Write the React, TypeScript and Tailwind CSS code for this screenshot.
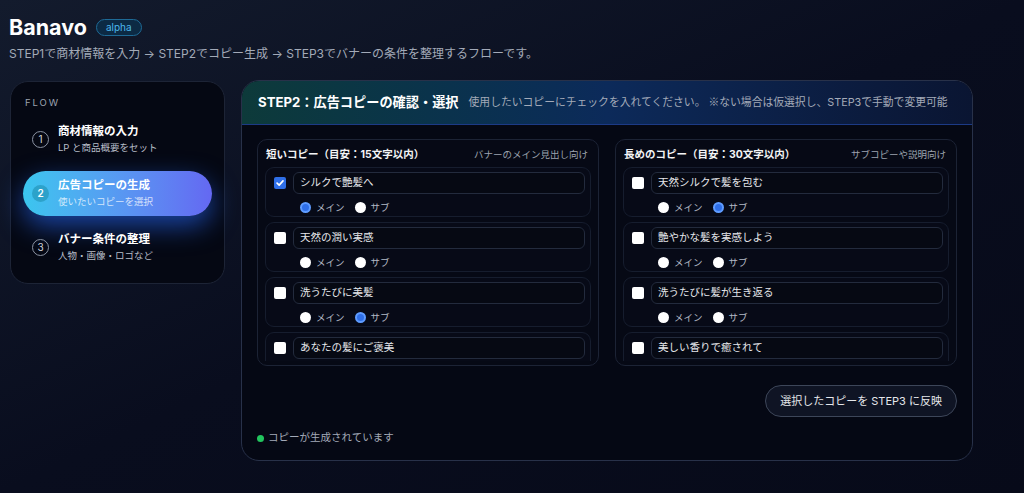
import React from 'react'

type Role = 'main' | 'sub' | null

interface CopyItem {
  text: string
  checked: boolean
  role: Role
}

const shortCopies: CopyItem[] = [
  { text: 'シルクで艶髪へ', checked: true, role: 'main' },
  { text: '天然の潤い実感', checked: false, role: null },
  { text: '洗うたびに美髪', checked: false, role: 'sub' },
  { text: 'あなたの髪にご褒美', checked: false, role: null },
]

const longCopies: CopyItem[] = [
  { text: '天然シルクで髪を包む', checked: false, role: 'sub' },
  { text: '艶やかな髪を実感しよう', checked: false, role: null },
  { text: '洗うたびに髪が生き返る', checked: false, role: null },
  { text: '美しい香りで癒されて', checked: false, role: null },
]

const steps = [
  { no: 1, title: '商材情報の入力', sub: 'LP と商品概要をセット' },
  { no: 2, title: '広告コピーの生成', sub: '使いたいコピーを選択' },
  { no: 3, title: 'バナー条件の整理', sub: '人物・画像・ロゴなど' },
]

function Checkbox({ checked }: { checked: boolean }) {
  if (checked) {
    return (
      <span className="flex h-[12px] w-[12px] shrink-0 items-center justify-center rounded-[2px] bg-[#2f6fe8]">
        <svg viewBox="0 0 12 12" className="h-[10px] w-[10px]" fill="none" stroke="white" strokeWidth="2" strokeLinecap="round" strokeLinejoin="round">
          <path d="M2.5 6.2 5 8.6 9.6 3.4" />
        </svg>
      </span>
    )
  }
  return <span className="h-[12px] w-[12px] shrink-0 rounded-[2px] bg-white" />
}

function Radio({ on, label }: { on: boolean; label: string }) {
  return (
    <span className="flex items-center gap-[5px]">
      {on ? (
        <span className="h-[11px] w-[11px] rounded-full border-[2px] border-[#5f9cff] bg-[#2f6fe8]" />
      ) : (
        <span className="h-[11px] w-[11px] rounded-full bg-white" />
      )}
      <span className="text-[9.5px] leading-[13px] text-[#b4bac6]">{label}</span>
    </span>
  )
}

// the last card sits under the scroll edge, so its radio row is never visible
function CopyCard({ item, clipped }: { item: CopyItem; clipped: boolean }) {
  return (
    <div className="h-[50px] shrink-0 rounded-[9px] border border-[#161d2e] bg-[#070a17] pb-[2px] pl-[8px] pr-[5px] pt-[4px]">
      <div className="flex items-center gap-[7px]">
        <Checkbox checked={item.checked} />
        <div className="flex h-[22px] flex-1 items-center rounded-[6px] border border-[#232b3d] bg-[#060913] px-[6px] text-[10.5px] text-[#e5e7eb]">
          {item.text}
        </div>
      </div>
      {!clipped && (
        <div className="mt-[7px] flex h-[13px] items-center gap-[10px] pl-[26px]">
          <Radio on={item.role === 'main'} label="メイン" />
          <Radio on={item.role === 'sub'} label="サブ" />
        </div>
      )}
    </div>
  )
}

function CopyColumn({ title, hint, items }: { title: string; hint: string; items: CopyItem[] }) {
  return (
    <div className="rounded-[10px] border border-[#1c2335] bg-[#060915] px-[7px] pb-[4px] pt-[7px]">
      <div className="flex h-[16px] items-center justify-between px-[1px]">
        <span className="text-[10.5px] font-bold text-[#f3f4f6]">{title}</span>
        <span className="pr-[2px] text-[9.5px] text-[#9ca3af]">{hint}</span>
      </div>
      <div className="mt-[4px] flex h-[194px] flex-col gap-[5px] overflow-hidden">
        {items.map((item, i) => (
          <CopyCard key={item.text} item={item} clipped={i === items.length - 1} />
        ))}
      </div>
    </div>
  )
}

function FlowStep({ no, title, sub, active }: { no: number; title: string; sub: string; active: boolean }) {
  return (
    <div
      className={
        active
          ? 'flex h-[45px] items-center gap-[9px] rounded-full bg-gradient-to-r from-[#3ac6ef] to-[#6468f2] px-[9px] shadow-[0_10px_26px_rgba(37,99,235,0.65)]'
          : 'flex h-[45px] items-center gap-[9px] rounded-full px-[9px]'
      }
    >
      {active ? (
        <span className="flex h-[17px] w-[17px] shrink-0 items-center justify-center rounded-full bg-[#1f8fb0]/60 text-[10px] font-semibold text-white">
          {no}
        </span>
      ) : (
        <span className="flex h-[17px] w-[17px] shrink-0 items-center justify-center rounded-full border border-[#8b93a3] text-[10px] text-[#d1d5db]">
          {no}
        </span>
      )}
      <div>
        <div className="text-[11.5px] font-bold leading-4 text-white">{title}</div>
        <div className={active ? 'text-[9.5px] leading-[18px] text-white/75' : 'text-[9.5px] leading-[18px] text-[#b8bec9]'}>{sub}</div>
      </div>
    </div>
  )
}

export default function App() {
  return (
    <div className="h-[493px] overflow-hidden bg-gradient-to-br from-[#131b2d] via-[#090d1e] to-[#070a19] font-['Inter','Noto_Sans_CJK_JP',sans-serif] text-white">
      <div className="px-[10px] pt-[13px]">
        <div className="flex items-center gap-[9px]">
          <h1 className="-ml-px text-[21.5px] font-bold leading-7">Banavo</h1>
          <span className="rounded-full border border-[#1e6a96] bg-[#0c2a44] px-[9px] text-[10px] leading-[15px] text-[#4cb8ec]">alpha</span>
        </div>
        <p className="-ml-px mt-[5px] text-[12px] leading-4 text-[#a3aab8]">
          STEP1で商材情報を入力 → STEP2でコピー生成 → STEP3でバナーの条件を整理するフローです。
        </p>

        <div className="mt-[19px] flex items-start gap-4">
          <aside className="h-[203px] w-[215px] shrink-0 rounded-[18px] border border-[#1d2436] bg-[#050813] px-[12px] pt-[14px]">
            <div className="pl-[2px] text-[9.5px] leading-[14px] tracking-[0.2em] text-[#9ca3af]">FLOW</div>
            <div className="mt-[7px] flex flex-col gap-[9px]">
              {steps.map((s) => (
                <FlowStep key={s.no} no={s.no} title={s.title} sub={s.sub} active={s.no === 2} />
              ))}
            </div>
          </aside>

          <main className="-mt-px w-[732px] shrink-0 overflow-hidden rounded-[18px] border border-[#283149] bg-[#050814]">
            <div className="flex h-[44px] items-center gap-[10px] border-b border-[#1c3a86] bg-gradient-to-r from-[#0d3a3a] via-[#0c2a5a] to-[#0a1532] px-4">
              <span className="text-[13.2px] font-bold text-white">STEP2：広告コピーの確認・選択</span>
              <span className="text-[10.8px] text-[#a3aab8]">
                使用したいコピーにチェックを入れてください。 <span className="font-['Noto_Sans_CJK_JP',sans-serif]">※</span>ない場合は仮選択し、STEP3で手動で変更可能
              </span>
            </div>
            <div className="px-[15px] pb-[15px] pt-[14px]">
              <div className="grid grid-cols-2 gap-4">
                <CopyColumn title="短いコピー（目安：15文字以内）" hint="バナーのメイン見出し向け" items={shortCopies} />
                <CopyColumn title="長めのコピー（目安：30文字以内）" hint="サブコピーや説明向け" items={longCopies} />
              </div>
              <div className="mt-[19px] flex justify-end">
                <button className="h-[32px] rounded-full border border-[#3d4659] bg-[#0f1424] px-[14px] text-[11px] text-[#e5e7eb]">
                  選択したコピーを STEP3 に反映
                </button>
              </div>
              <div className="mt-[14px] flex items-center gap-[4px]">
                <span className="h-[7px] w-[7px] rounded-full bg-[#22c55e]" />
                <span className="text-[10.5px] leading-[14px] text-[#a3aab8]">コピーが生成されています</span>
              </div>
            </div>
          </main>
        </div>
      </div>
    </div>
  )
}
